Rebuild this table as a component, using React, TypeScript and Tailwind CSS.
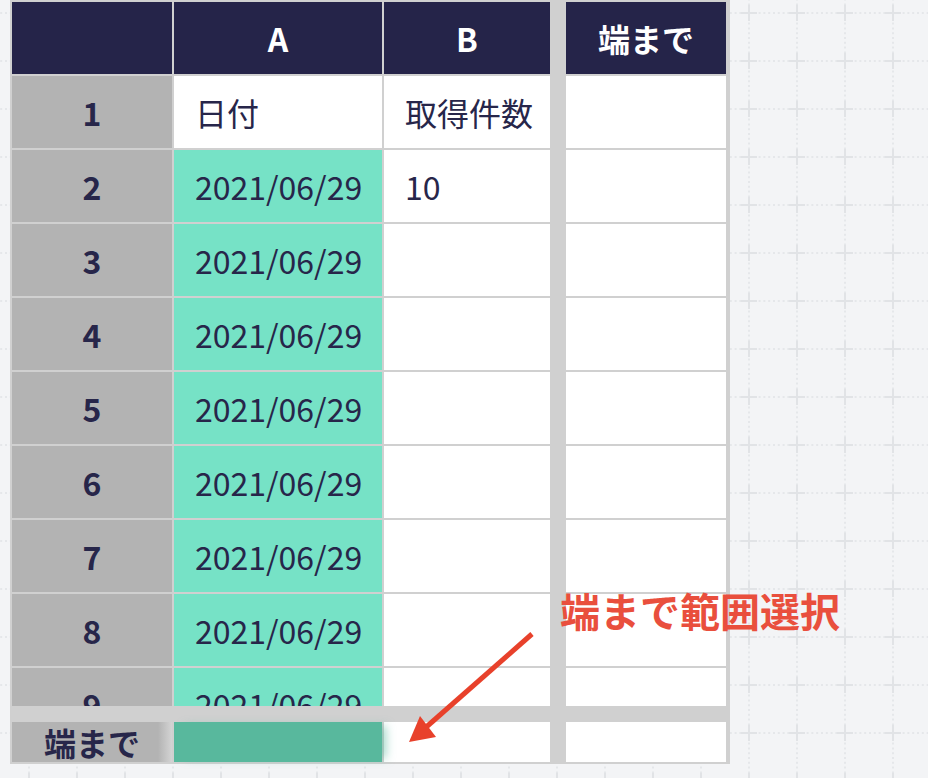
import React from "react";

const rows = [1, 2, 3, 4, 5, 6, 7, 8, 9];

function GridBackground() {
  return (
    <svg className="col-start-1 row-start-1 w-[928px] h-[778px]" width="928" height="778">
      <defs>
        <pattern id="bg-grid" x="5" y="-11" width="48" height="48" patternUnits="userSpaceOnUse">
          <line x1="0" y1="24" x2="48" y2="24" stroke="#e5e7ea" strokeWidth="2" strokeDasharray="2 2.8" />
          <line x1="24" y1="0" x2="24" y2="48" stroke="#e5e7ea" strokeWidth="2" strokeDasharray="2 2.8" />
          <rect x="16" y="23" width="16" height="2" fill="#e1e3e6" />
          <rect x="23" y="16" width="2" height="16" fill="#e1e3e6" />
        </pattern>
      </defs>
      <rect width="928" height="778" fill="url(#bg-grid)" />
    </svg>
  );
}

function HeadCell({ children }: { children?: React.ReactNode }) {
  return (
    <div className="bg-[#252449] text-white font-bold flex items-center justify-center">
      {children}
    </div>
  );
}

function RowHead({ children }: { children: React.ReactNode }) {
  return (
    <div className="bg-[#b3b3b3] font-bold flex items-center justify-center">{children}</div>
  );
}

function Cell({ children, teal }: { children?: React.ReactNode; teal?: boolean }) {
  return (
    <div
      className={`${teal ? "bg-[#76e2c6]" : "bg-white"} flex items-center pl-[21px] whitespace-nowrap`}
    >
      {children}
    </div>
  );
}

export default function App() {
  return (
    <div className="grid w-[928px] h-[778px] overflow-hidden bg-[#f3f4f6] text-[#27264a] text-[32px] leading-none font-['Noto_Sans_CJK_JP','Noto_Sans',sans-serif]">
      <GridBackground />
      <div className="col-start-1 row-start-1 relative">
        <div className="ml-[10px] w-fit bg-[#d0d0d0] pt-[2px] pl-[2px] pr-[4px] pb-[2px] flex flex-col gap-[16px]">
          {/* scrolled area */}
          <div className="flex items-start gap-[16px] h-[704px] overflow-hidden">
            <div className="grid grid-cols-[160px_208px_166px] auto-rows-[72px] gap-[2px]">
              <HeadCell />
              <HeadCell>A</HeadCell>
              <HeadCell>B</HeadCell>
              {rows.map((r) => (
                <React.Fragment key={r}>
                  <RowHead>{r}</RowHead>
                  <Cell teal={r > 1}>{r === 1 ? "日付" : "2021/06/29"}</Cell>
                  <Cell>{r === 1 ? "取得件数" : r === 2 ? "10" : null}</Cell>
                </React.Fragment>
              ))}
            </div>
            <div className="grid grid-cols-[160px] auto-rows-[72px] gap-[2px]">
              <HeadCell>端まで</HeadCell>
              {rows.map((r) => (
                <Cell key={r} />
              ))}
            </div>
          </div>
          {/* frozen bottom row */}
          <div className="flex gap-[16px] h-[40px]">
            <div className="grid grid-cols-[160px_208px_166px] gap-[2px]">
              <div className="bg-[linear-gradient(to_right,#b3b3b3_calc(100%-14px),#d4d4d4)] font-bold flex items-center justify-center">
                端まで
              </div>
              <div className="relative z-10 bg-[#58b89d] shadow-[8px_0_10px_-4px_rgba(88,184,157,0.55)]" />
              <div className="bg-white" />
            </div>
            <div className="w-[160px] bg-white" />
          </div>
        </div>

        {/* annotation */}
        <div className="absolute left-[560px] top-[590px] text-[40px] font-bold leading-none text-[#e94f3d] whitespace-nowrap">
          端まで範囲選択
        </div>
        <svg className="absolute left-[400px] top-[625px]" width="140" height="125" viewBox="0 0 140 125">
          <line x1="132" y1="9" x2="24" y2="104" stroke="#e8412b" strokeWidth="5" strokeLinecap="butt" />
          <polygon points="9,117 20,91 36,112" fill="#e8412b" />
        </svg>
      </div>
    </div>
  );
}
